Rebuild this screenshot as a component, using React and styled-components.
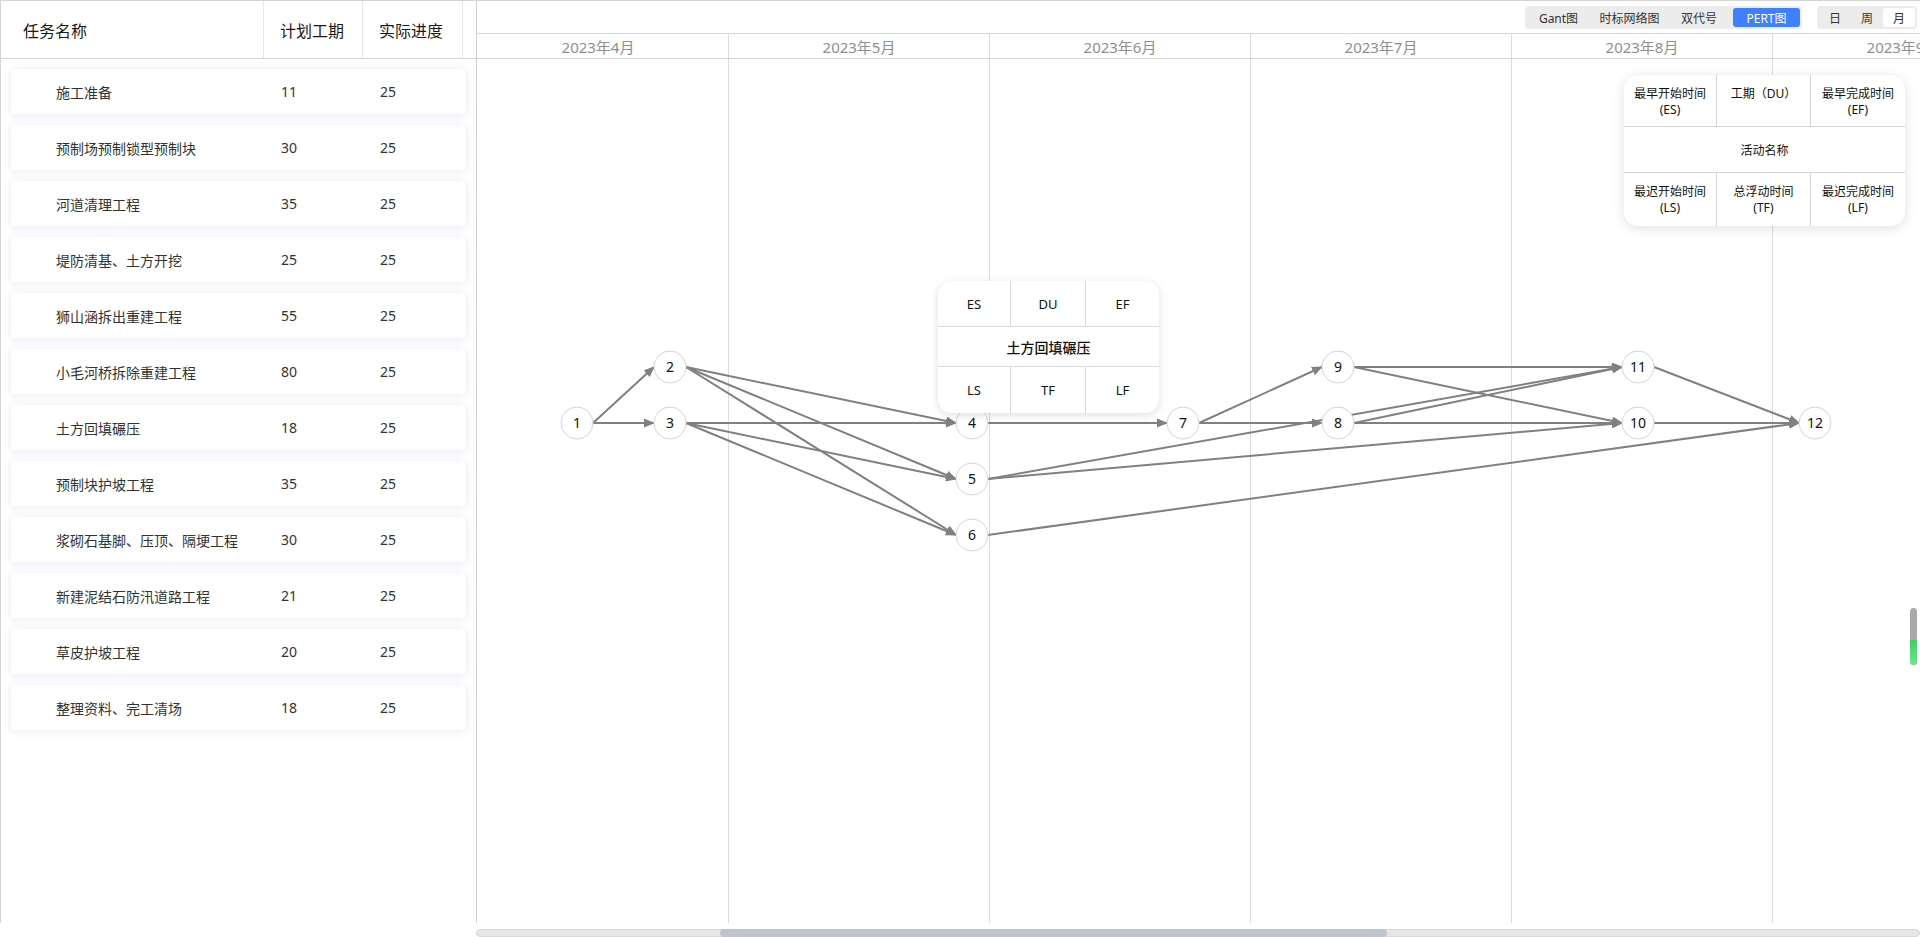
import React from 'react';
import styled, { createGlobalStyle } from 'styled-components';

const tasks = [
    { name: '施工准备', plan: 11, actual: 25 },
    { name: '预制场预制锁型预制块', plan: 30, actual: 25 },
    { name: '河道清理工程', plan: 35, actual: 25 },
    { name: '堤防清基、土方开挖', plan: 25, actual: 25 },
    { name: '狮山涵拆出重建工程', plan: 55, actual: 25 },
    { name: '小毛河桥拆除重建工程', plan: 80, actual: 25 },
    { name: '土方回填碾压', plan: 18, actual: 25 },
    { name: '预制块护坡工程', plan: 35, actual: 25 },
    { name: '浆砌石基脚、压顶、隔埂工程', plan: 30, actual: 25 },
    { name: '新建泥结石防汛道路工程', plan: 21, actual: 25 },
    { name: '草皮护坡工程', plan: 20, actual: 25 },
    { name: '整理资料、完工清场', plan: 18, actual: 25 },
];

const months = ['2023年4月', '2023年5月', '2023年6月', '2023年7月', '2023年8月', '2023年9月'];

// node centres, relative to the chart body
const nodes = {
    1: [100, 364],
    2: [193, 308],
    3: [193, 364],
    4: [495, 364],
    5: [495, 420],
    6: [495, 476],
    7: [706, 364],
    8: [861, 364],
    9: [861, 308],
    10: [1161, 364],
    11: [1161, 308],
    12: [1338, 364],
};

const edges = [
    [1, 2], [1, 3],
    [2, 4], [2, 5], [2, 6],
    [3, 4], [3, 5], [3, 6],
    [4, 7],
    [5, 11], [5, 10],
    [6, 12],
    [7, 9], [7, 8],
    [9, 11], [9, 10],
    [8, 11], [8, 10],
    [11, 12], [10, 12],
];

const R = 16;

const legendTop = [
    ['最早开始时间', '(ES)'],
    ['工期（DU）'],
    ['最早完成时间', '(EF)'],
];
const legendBottom = [
    ['最迟开始时间', '(LS)'],
    ['总浮动时间', '(TF)'],
    ['最迟完成时间', '(LF)'],
];

const PertChart = () => (
    <Svg width="1443" height="864">
        <defs>
            <marker id="arrow" markerUnits="userSpaceOnUse" markerWidth="11" markerHeight="9" refX="10" refY="4.5" orient="auto">
                <path d="M0,0 L11,4.5 L0,9 z" fill="#808080" />
            </marker>
        </defs>
        {edges.map(([from, to]) => {
            const [sx, sy] = nodes[from];
            const [tx, ty] = nodes[to];
            return (
                <line
                    key={`${from}-${to}`}
                    x1={sx + R}
                    y1={sy}
                    x2={tx - R}
                    y2={ty}
                    stroke="#808080"
                    strokeWidth="2"
                    markerEnd="url(#arrow)"
                />
            );
        })}
        {Object.entries(nodes).map(([id, [x, y]]) => (
            <g key={id}>
                <circle cx={x} cy={y} r={R} fill="#fff" stroke="#d4d4d4" strokeWidth="1" />
                <NodeText x={x} y={y + 5} textAnchor="middle">{id}</NodeText>
            </g>
        ))}
    </Svg>
);

const App = () => {
    return (
        <>
            <GlobalStyle />
            <Page>
                <Main>
                    <LeftPanel>
                        <TableHeader>
                            <HeadCell $pad={22}>任务名称</HeadCell>
                            <HeadCell>计划工期</HeadCell>
                            <HeadCell>实际进度</HeadCell>
                            <HeadCell />
                        </TableHeader>
                        <TaskList>
                            {tasks.map((task) => (
                                <TaskCard key={task.name}>
                                    <TaskName>{task.name}</TaskName>
                                    <TaskValue>{task.plan}</TaskValue>
                                    <TaskValue>{task.actual}</TaskValue>
                                </TaskCard>
                            ))}
                        </TaskList>
                    </LeftPanel>

                    <RightPanel>
                        <Toolbar>
                            <ButtonGroup>
                                <ViewButton $w={63}>Gant图</ViewButton>
                                <ViewButton $w={79}>时标网络图</ViewButton>
                                <ViewButton $w={60}>双代号</ViewButton>
                                <ViewButton $w={67} $primary>PERT图</ViewButton>
                            </ButtonGroup>
                            <ButtonGroup>
                                <ViewButton $w={32}>日</ViewButton>
                                <ViewButton $w={32}>周</ViewButton>
                                <ViewButton $w={32} $active>月</ViewButton>
                            </ButtonGroup>
                        </Toolbar>
                        <DateRow>
                            {months.map((m) => (
                                <MonthCell key={m}>{m}</MonthCell>
                            ))}
                        </DateRow>
                        <ChartBody>
                            <GridLines>
                                {months.map((m) => (
                                    <GridColumn key={m} />
                                ))}
                            </GridLines>
                            <PertChart />
                            <NodeCard>
                                <CardRow $h={46}>
                                    <CardCell>ES</CardCell>
                                    <CardCell>DU</CardCell>
                                    <CardCell>EF</CardCell>
                                </CardRow>
                                <CardTitle>土方回填碾压</CardTitle>
                                <CardRow $h={46} $last>
                                    <CardCell>LS</CardCell>
                                    <CardCell>TF</CardCell>
                                    <CardCell>LF</CardCell>
                                </CardRow>
                            </NodeCard>
                            <Legend>
                                <LegendRow>
                                    {legendTop.map((lines) => (
                                        <LegendCell key={lines[0]}>
                                            {lines.map((l) => <div key={l}>{l}</div>)}
                                        </LegendCell>
                                    ))}
                                </LegendRow>
                                <LegendTitle>活动名称</LegendTitle>
                                <LegendRow $last>
                                    {legendBottom.map((lines) => (
                                        <LegendCell key={lines[0]}>
                                            {lines.map((l) => <div key={l}>{l}</div>)}
                                        </LegendCell>
                                    ))}
                                </LegendRow>
                            </Legend>
                            <ZoomIndicator>
                                <ZoomFill />
                            </ZoomIndicator>
                        </ChartBody>
                    </RightPanel>
                </Main>
                <Footer>
                    <ScrollTrack>
                        <ScrollThumb />
                    </ScrollTrack>
                </Footer>
            </Page>
        </>
    );
};

const GlobalStyle = createGlobalStyle`
    * {
        box-sizing: border-box;
    }
    body {
        margin: 0;
        background: #fff;
        font-family: "Noto Sans", "Noto Sans CJK SC", sans-serif;
        color: #333;
    }
`;

const Page = styled.div`
    width: 1920px;
    height: 937px;
    display: flex;
    flex-direction: column;
    overflow: hidden;
`;

const Main = styled.div`
    height: 923px;
    display: flex;
    border-top: 1px solid #d4d4d4;
    border-left: 1px solid #d4d4d4;
`;

const LeftPanel = styled.div`
    width: 476px;
    flex-shrink: 0;
    border-right: 1px solid #cfcfcf;
    display: flex;
    flex-direction: column;
`;

const TableHeader = styled.div`
    height: 58px;
    display: grid;
    grid-template-columns: 263px 99px 100px 1fr;
    border-bottom: 1px solid #d4d4d4;
`;

const HeadCell = styled.div`
    display: flex;
    align-items: center;
    padding-left: ${props => props.$pad || 16}px;
    border-right: 1px solid #e8e8e8;
    font-size: 16px;
    color: #1a1a1a;

    &:last-child {
        border-right: none;
    }
`;

const TaskList = styled.div`
    padding: 10px 10px 0 10px;
    display: flex;
    flex-direction: column;
    gap: 11px;
`;

const TaskCard = styled.div`
    height: 45px;
    display: grid;
    grid-template-columns: 253px 99px 1fr;
    align-items: center;
    background: #fff;
    border-radius: 4px;
    box-shadow: 0 1px 8px rgba(90, 100, 170, 0.14);
    font-size: 14px;
    color: #333;
`;

const TaskName = styled.div`
    padding-left: 45px;
`;

const TaskValue = styled.div`
    padding-left: 17px;
`;

const RightPanel = styled.div`
    flex: 1;
    display: flex;
    flex-direction: column;
    min-width: 0;
    overflow: hidden;
`;

const Toolbar = styled.div`
    height: 32px;
    display: flex;
    justify-content: flex-end;
    align-items: flex-start;
    gap: 15px;
    padding: 5px 3px 0 0;
`;

const ButtonGroup = styled.div`
    display: flex;
    align-items: center;
    height: 23px;
    padding: 2px;
    background: #ececec;
    border-radius: 4px;
`;

const ViewButton = styled.div`
    width: ${props => props.$w}px;
    height: 19px;
    margin-left: ${props => (props.$primary ? 4 : 0)}px;
    display: flex;
    align-items: center;
    justify-content: center;
    font-size: 12px;
    border-radius: 3px;
    color: ${props => (props.$primary ? '#fff' : '#333')};
    background: ${props => (props.$primary ? '#4080ff' : props.$active ? '#fff' : 'transparent')};
`;

const DateRow = styled.div`
    height: 26px;
    display: flex;
    border-top: 1px solid #d8d8d8;
    border-bottom: 1px solid #d4d4d4;
`;

const MonthCell = styled.div`
    width: 261px;
    flex-shrink: 0;
    border-right: 1px solid #dcdcdc;
    display: flex;
    align-items: center;
    justify-content: center;
    font-size: 15px;
    color: #8f8f8f;
    white-space: nowrap;

    &:first-child {
        margin-left: -9px;
    }
`;

const ChartBody = styled.div`
    flex: 1;
    position: relative;
`;

const GridLines = styled.div`
    height: 100%;
    display: flex;
`;

const GridColumn = styled.div`
    width: 261px;
    flex-shrink: 0;
    border-right: 1px solid #dcdcdc;

    &:first-child {
        margin-left: -9px;
    }
`;

const Svg = styled.svg`
    position: absolute;
    left: 0;
    top: 0;
`;

const NodeText = styled.text`
    font-family: "Noto Sans", sans-serif;
    font-size: 14px;
    fill: #111;
`;

const NodeCard = styled.div`
    position: absolute;
    left: 461px;
    top: 222px;
    width: 221px;
    background: #fff;
    border-radius: 14px;
    box-shadow: 0 2px 10px rgba(0, 0, 0, 0.13);
    overflow: hidden;
`;

const CardRow = styled.div`
    height: ${props => props.$h}px;
    display: grid;
    grid-template-columns: 73px 75px 1fr;
    border-bottom: ${props => (props.$last ? 'none' : '1px solid #d9d9d9')};
`;

const CardCell = styled.div`
    display: flex;
    align-items: center;
    justify-content: center;
    border-right: 1px solid #d9d9d9;
    font-size: 13px;
    color: #111;

    &:last-child {
        border-right: none;
    }
`;

const CardTitle = styled.div`
    height: 40px;
    display: flex;
    align-items: center;
    justify-content: center;
    border-bottom: 1px solid #d9d9d9;
    font-size: 14px;
    font-weight: 500;
    color: #111;
`;

const Legend = styled.div`
    position: absolute;
    right: 15px;
    top: 16px;
    width: 281px;
    background: #fff;
    border-radius: 14px;
    box-shadow: 0 2px 12px rgba(0, 0, 0, 0.13);
    overflow: hidden;
`;

const LegendRow = styled.div`
    height: ${props => (props.$last ? 53 : 52)}px;
    display: grid;
    grid-template-columns: 93px 94px 1fr;
    border-bottom: ${props => (props.$last ? 'none' : '1px solid #d4d4d4')};
`;

const LegendCell = styled.div`
    padding-top: 11px;
    text-align: center;
    font-size: 12px;
    line-height: 16px;
    color: #111;
    border-right: 1px solid #d4d4d4;

    &:last-child {
        border-right: none;
    }
`;

const LegendTitle = styled.div`
    height: 46px;
    display: flex;
    align-items: center;
    justify-content: center;
    font-size: 12px;
    color: #111;
    border-bottom: 1px solid #d4d4d4;
`;

const ZoomIndicator = styled.div`
    position: absolute;
    right: 3px;
    top: 549px;
    width: 7px;
    height: 57px;
    border-radius: 4px;
    background: #a9a9a9;
    overflow: hidden;
    display: flex;
    flex-direction: column;
    justify-content: flex-end;
`;

const ZoomFill = styled.div`
    height: 25px;
    background: linear-gradient(180deg, #3fcf63, #6ee68c);
`;

const Footer = styled.div`
    flex: 1;
    display: flex;
    align-items: flex-end;
    padding-left: 476px;
`;

const ScrollTrack = styled.div`
    flex: 1;
    height: 8px;
    background: #e6e6e6;
    border: 1px solid #d9d9d9;
    border-radius: 4px;
    position: relative;
`;

const ScrollThumb = styled.div`
    position: absolute;
    left: 243px;
    top: -1px;
    width: 667px;
    height: 8px;
    border-radius: 4px;
    background: #c0c4ce;
`;

export default App;
